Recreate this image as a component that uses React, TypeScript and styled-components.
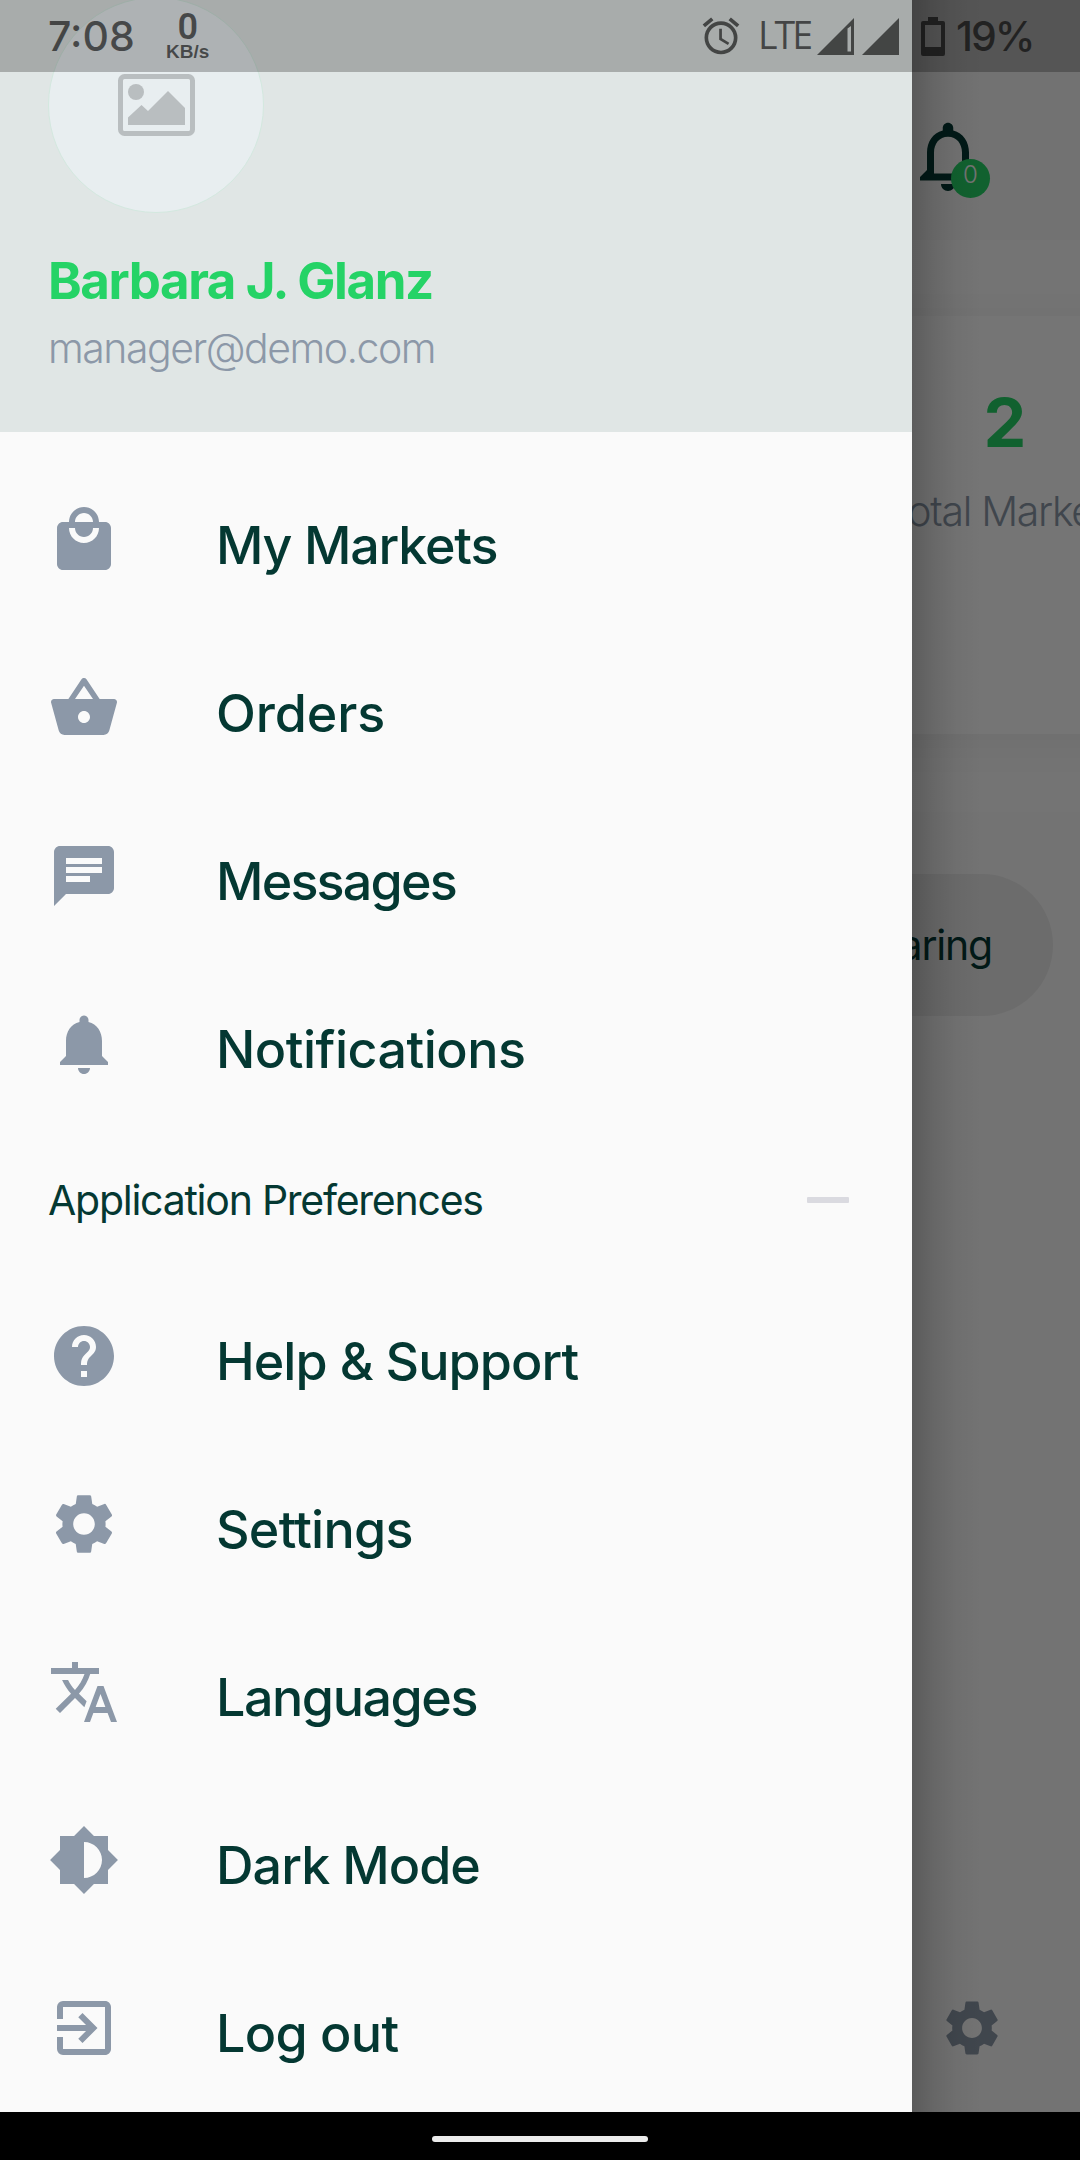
import React from "react";
import styled, { createGlobalStyle } from "styled-components";
import {
  MdAccessAlarm,
  MdBrightness6,
  MdChat,
  MdExitToApp,
  MdHelp,
  MdLocalMall,
  MdSettings,
  MdShoppingBasket,
  MdTranslate,
} from "react-icons/md";

const color = {
  accent: "#043832",
  main: "#25d366",
  hint: "#8c98a8",
  surface: "#fafafa",
  header: "#e0e6e5",
  status: "rgba(0, 0, 0, 0.6)",
};

const GlobalStyle = createGlobalStyle`
  *, *::before, *::after { box-sizing: border-box; }
  body {
    margin: 0;
    background: #000;
    font-family: Inter, "Open Sans", sans-serif;
  }
  svg { display: block; flex: none; }
`;

const Screen = styled.div`
  position: relative;
  display: flex;
  flex-direction: column;
  width: 1080px;
  height: 2160px;
  overflow: hidden;
  background: #000;
`;

const Label = styled.span<{ $size: number; $weight?: number; $spacing?: number; $line?: number; $tone?: string }>`
  font-size: ${(p) => p.$size}px;
  font-weight: ${(p) => p.$weight ?? 400};
  letter-spacing: ${(p) => p.$spacing ?? 0}px;
  line-height: ${(p) => p.$line ?? 60}px;
  color: ${(p) => p.$tone ?? color.accent};
  white-space: nowrap;
`;

/* ---------- Home page beneath the drawer ---------- */

const Home = styled.main`
  display: flex;
  flex-direction: column;
  height: 2112px;
  background: ${color.surface};
`;

const AppBar = styled.header`
  display: flex;
  align-items: center;
  justify-content: flex-end;
  height: 240px;
  padding: 72px 90px 0 0;
  background: #f8f8f8;
`;

const BellButton = styled.div`
  position: relative;
  width: 84px;
  height: 84px;
  color: ${color.accent};
`;

const Badge = styled.span`
  position: absolute;
  left: 45px;
  top: 45px;
  display: flex;
  justify-content: center;
  width: 39px;
  height: 39px;
  padding-top: 1px;
  border-radius: 50%;
  background: ${color.main};
`;

const Statistics = styled.section`
  display: flex;
  justify-content: flex-end;
  height: 572px;
  padding: 76px 0 78px;
  background: #fcfcfc;
`;

const StatCard = styled.div`
  display: flex;
  flex-direction: column;
  align-items: center;
  width: 420px;
  margin-right: -135px;
  padding-top: 61px;
  background: #fefefe;
  box-shadow: 0 8px 40px rgba(0, 0, 0, 0.05);
`;

const Filters = styled.section`
  display: flex;
  justify-content: flex-end;
  padding: 62px 27px 0 0;
`;

const Chip = styled.div`
  display: flex;
  align-items: center;
  height: 142px;
  padding: 0 61px;
  border-radius: 71px;
  background: #ebebeb;
`;

const HomeFooter = styled.footer`
  display: flex;
  justify-content: flex-end;
  margin-top: auto;
  padding: 0 75px 51px 0;
  color: ${color.hint};
`;

const Scrim = styled.div`
  position: absolute;
  inset: 0 0 48px 0;
  background: rgba(0, 0, 0, 0.54);
`;

/* ---------- Drawer ---------- */

const Drawer = styled.aside`
  position: absolute;
  left: 0;
  top: 0;
  display: flex;
  flex-direction: column;
  width: 912px;
  height: 2112px;
  background: ${color.surface};

  &::after {
    content: "";
    position: absolute;
    left: 100%;
    top: 0;
    width: 70px;
    height: 100%;
    background: linear-gradient(
      to right,
      rgba(0, 0, 0, 0.21),
      rgba(0, 0, 0, 0.11) 22px,
      rgba(0, 0, 0, 0.04) 44px,
      rgba(0, 0, 0, 0)
    );
  }
`;

const Account = styled.div`
  display: flex;
  flex-direction: column;
  align-items: flex-start;
  flex: none;
  height: 432px;
  padding-left: 48px;
  background: ${color.header};
`;

const Avatar = styled.div`
  display: flex;
  align-items: center;
  justify-content: center;
  width: 216px;
  height: 216px;
  margin: -3px 0 38px;
  border: 1px solid #d3e8df;
  border-radius: 50%;
  background: #e8eef0;
`;

const Menu = styled.nav`
  display: flex;
  flex-direction: column;
  padding-top: 24px;
`;

const Tile = styled.div`
  display: flex;
  align-items: center;
  gap: 96px;
  height: 168px;
  padding-left: 48px;
  color: ${color.hint};
`;

const TileText = styled.div`
  padding-top: 11px;
`;

const Section = styled.div`
  display: flex;
  align-items: center;
  justify-content: space-between;
  height: 144px;
  padding: 0 63px 0 48px;
`;

const Minus = styled.span`
  width: 42px;
  height: 6px;
  border-radius: 1px;
  background: #dadae0;
`;

/* ---------- System bars ---------- */

const StatusBar = styled.div`
  position: absolute;
  left: 0;
  top: 0;
  display: flex;
  align-items: center;
  justify-content: space-between;
  width: 1080px;
  height: 72px;
  padding: 0 46px 0 48px;
  background: rgba(0, 0, 0, 0.25);
  color: ${color.status};
`;

const StatusGroup = styled.div<{ $width?: number }>`
  display: flex;
  align-items: center;
  width: ${(p) => (p.$width ? `${p.$width}px` : "auto")};
`;

const Speed = styled.div`
  display: flex;
  flex-direction: column;
  align-items: center;
  width: 48px;
  margin-left: 29px;
  padding-top: 2px;
  font-family: "Liberation Sans", Arial, sans-serif;
`;

const SpeedValue = styled(Label)`
  font-family: Roboto, sans-serif;
`;

const Network = styled(Label)`
  width: 56px;
  margin: 0 3px 3px 15px;
  font-family: "Open Sans", sans-serif;
`;

const Signals = styled.div`
  display: flex;
  gap: 8px;
  margin-right: 22px;
`;

const BatteryLevel = styled(Label)`
  margin-left: 11px;
`;

const NavBar = styled.div`
  display: flex;
  align-items: center;
  justify-content: center;
  height: 48px;
  padding-top: 6px;
  background: #000;
`;

const HomeHandle = styled.span`
  width: 216px;
  height: 6px;
  border-radius: 3px;
  background: #ececec;
`;

const BELL =
  "M12 22c1.1 0 2-.9 2-2h-4c0 1.1.89 2 2 2zm6-6v-5c0-3.07-1.64-5.64-4.5-6.32V4c0-.83-.67-1.5-1.5-1.5s-1.5.67-1.5 1.5v.68C7.63 5.36 6 7.92 6 11v5l-2 2v1h16v-1l-2-2z";

const BellIcon = ({ size, outline }: { size: number; outline?: boolean }) => (
  <svg width={size} height={size} viewBox="0 0 24 24" fill="currentColor" fillRule="evenodd">
    <path d={BELL + (outline ? "M16 17H8v-6c0-2.48 1.51-4.5 4-4.5s4 2.02 4 4.5v6z" : "")} />
  </svg>
);

const ImageIcon = () => (
  <svg width="77" height="62" viewBox="0 0 77 62">
    <rect x="2.5" y="2.5" width="72" height="57" rx="4" fill="none" stroke="#b9bec0" strokeWidth="5" />
    <circle cx="18" cy="18" r="8" fill="#b9bec0" />
    <path d="M10 43.500 23.500 31 30 37 50 17 67 34V51H10z" fill="#b9bec0" />
  </svg>
);

const SignalIcon = ({ slit }: { slit?: boolean }) => (
  <svg width="37" height="37" viewBox="0 0 37 37" fill="currentColor" fillRule="evenodd">
    <path d={"M0 37 37 0V37z" + (slit ? "M30.500 10.500 34 8V33.500H30.500z" : "")} />
  </svg>
);

const BatteryIcon = () => (
  <svg width="24" height="39" viewBox="0 0 24 39" fill="currentColor" fillRule="evenodd">
    <path d="M7 0h10v4h5a2 2 0 0 1 2 2v31a2 2 0 0 1-2 2H2a2 2 0 0 1-2-2V6a2 2 0 0 1 2-2h5zM4 8v22h16V8z" />
  </svg>
);

const primary = [
  { text: "My Markets", icon: <MdLocalMall size={72} />, spacing: -1.2 },
  { text: "Orders", icon: <MdShoppingBasket size={72} />, spacing: -0.1 },
  { text: "Messages", icon: <MdChat size={72} />, spacing: -1.8 },
  { text: "Notifications", icon: <BellIcon size={72} />, spacing: -0.5 },
];

const preferences = [
  { text: "Help & Support", icon: <MdHelp size={72} />, spacing: -0.95 },
  { text: "Settings", icon: <MdSettings size={72} />, spacing: -0.75 },
  { text: "Languages", icon: <MdTranslate size={72} />, spacing: -1.45 },
  { text: "Dark Mode", icon: <MdBrightness6 size={72} />, spacing: -0.95 },
  { text: "Log out", icon: <MdExitToApp size={72} />, spacing: -0.7 },
];

const MenuTile = ({ text, icon, spacing }: { text: string; icon: React.ReactNode; spacing: number }) => (
  <Tile>
    {icon}
    <TileText>
      <Label $size={52} $weight={500} $spacing={spacing}>
        {text}
      </Label>
    </TileText>
  </Tile>
);

export default function App() {
  return (
    <Screen>
      <GlobalStyle />
      <Home>
        <AppBar>
          <BellButton>
            <BellIcon size={84} outline />
            <Badge>
              <Label $size={24} $weight={300} $line={30} $tone="#fafafa">
                0
              </Label>
            </Badge>
          </BellButton>
        </AppBar>
        <Statistics>
          <StatCard>
            <Label $size={68} $weight={700} $line={90} $tone={color.main}>
              2
            </Label>
            <Label $size={41} $weight={300} $spacing={-1.3} $line={88} $tone={color.hint}>
              Total Markets
            </Label>
          </StatCard>
        </Statistics>
        <Filters>
          <Chip>
            <Label $size={41} $spacing={-1.2}>
              Preparing
            </Label>
          </Chip>
        </Filters>
        <HomeFooter>
          <MdSettings size={66} />
        </HomeFooter>
      </Home>
      <NavBar>
        <HomeHandle />
      </NavBar>
      <Scrim />
      <Drawer>
        <Account>
          <Avatar>
            <ImageIcon />
          </Avatar>
          <Label $size={51} $weight={700} $spacing={-1.4} $tone={color.main}>
            Barbara J. Glanz
          </Label>
          <Label $size={41} $weight={300} $spacing={-1.5} $line={74} $tone={color.hint}>
            manager@demo.com
          </Label>
        </Account>
        <Menu>
          {primary.map((item) => (
            <MenuTile key={item.text} {...item} />
          ))}
          <Section>
            <Label $size={41} $spacing={-1.25}>
              Application Preferences
            </Label>
            <Minus />
          </Section>
          {preferences.map((item) => (
            <MenuTile key={item.text} {...item} />
          ))}
        </Menu>
      </Drawer>
      <StatusBar>
        <StatusGroup>
          <Label $size={41} $weight={500} $tone="currentColor">
            7:08
          </Label>
          <Speed>
            <SpeedValue $size={36} $weight={600} $line={30} $tone="currentColor">
              0
            </SpeedValue>
            <Label $size={19} $weight={700} $line={20} $tone="currentColor">
              KB/s
            </Label>
          </Speed>
        </StatusGroup>
        <StatusGroup $width={335}>
          <MdAccessAlarm size={44} />
          <Network $size={37.5} $spacing={-3} $tone="currentColor">
            LTE
          </Network>
          <Signals>
            <SignalIcon slit />
            <SignalIcon />
          </Signals>
          <BatteryIcon />
          <BatteryLevel $size={41} $weight={500} $spacing={-2} $tone="currentColor">
            19%
          </BatteryLevel>
        </StatusGroup>
      </StatusBar>
    </Screen>
  );
}
